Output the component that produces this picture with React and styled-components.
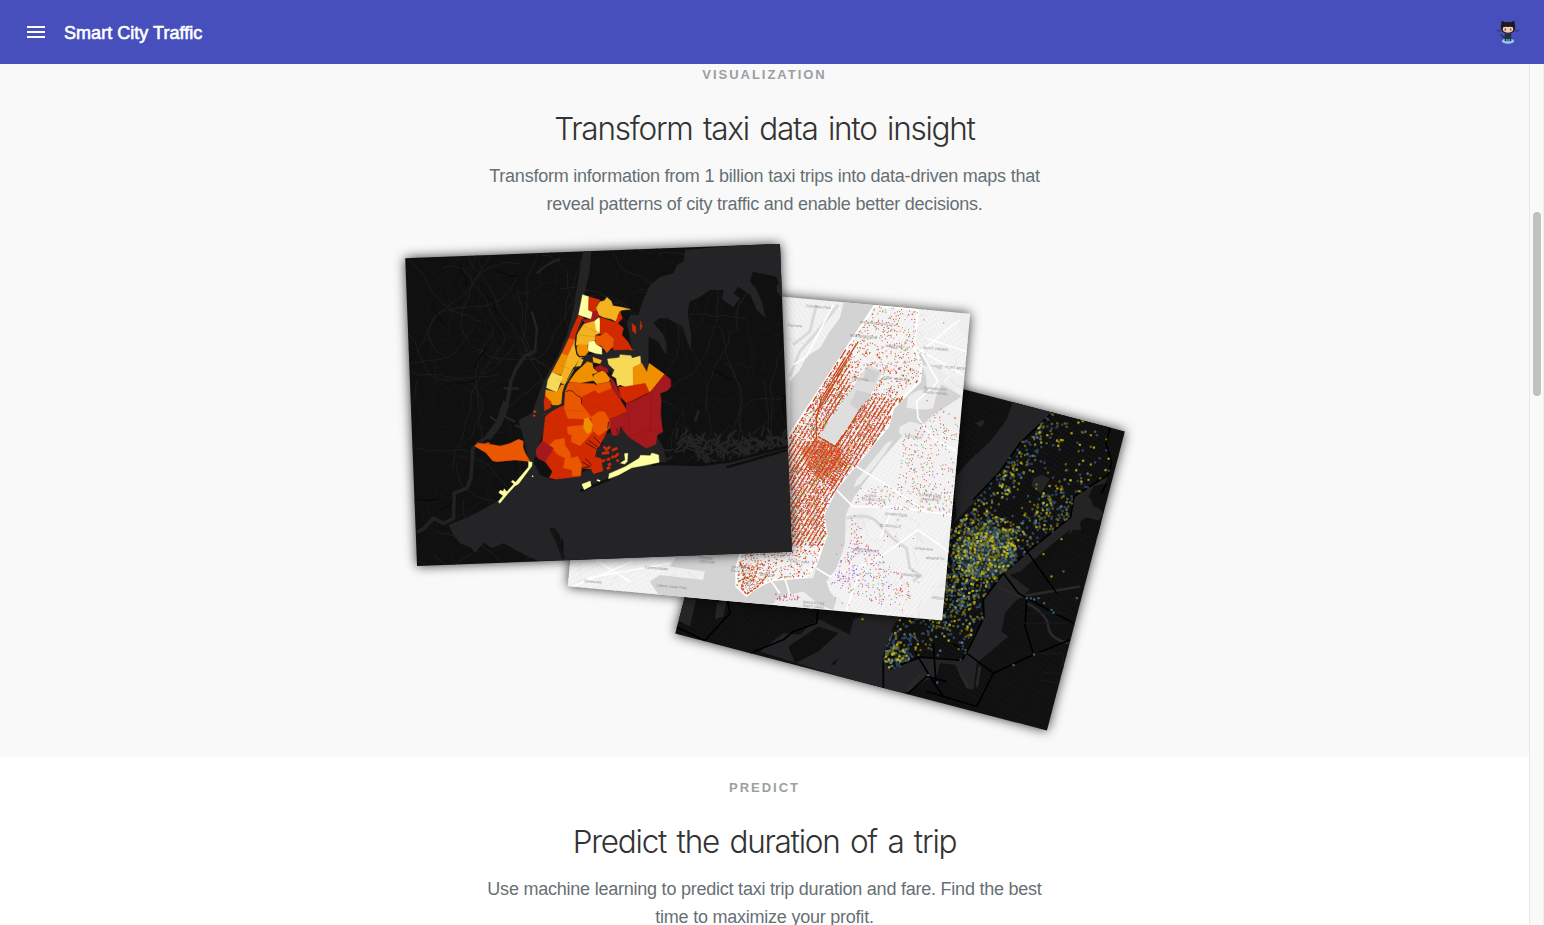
import React from 'react';
import styled, { createGlobalStyle } from 'styled-components';

const GlobalStyle = createGlobalStyle`
  *, *::before, *::after { box-sizing: border-box; }
  body {
    margin: 0;
    background: #fff;
    overflow: hidden;
    font-family: "Liberation Sans", Arial, sans-serif;
    -webkit-font-smoothing: antialiased;
  }
`;

const Page = styled.div`
  display: flex;
  flex-direction: column;
  height: 925px;
  overflow: hidden;
`;

const Toolbar = styled.header`
  display: flex;
  align-items: center;
  flex: none;
  height: 64px;
  padding: 0 24px 0 24px;
  background: #464fbb;
`;

const MenuButton = styled.button`
  display: flex;
  padding: 0;
  border: 0;
  background: none;
`;

const AppTitle = styled.h1`
  flex: 1;
  margin: 2px 0 0 16px;
  color: #fff;
  font-size: 18px;
  font-weight: 400;
  letter-spacing: 0.04px;
  -webkit-text-stroke: 0.6px #fff;
`;

const RepoLink = styled.a`
  display: flex;
`;

const Body = styled.div`
  display: flex;
  flex: 1;
  min-height: 0;
`;

const Content = styled.main`
  flex: 1;
  overflow: hidden;
`;

const ScrollTrack = styled.div`
  flex: none;
  width: 15px;
  padding: 148px 2px 0 3px;
  border-left: 1px solid #e8e8e8;
  border-right: 1px solid #ededed;
  background: #fafafa;
`;

const ScrollThumb = styled.div`
  width: 8px;
  height: 184px;
  border-radius: 4px;
  background: #c1c1c1;
`;

const Section = styled.section`
  display: flex;
  flex-direction: column;
  align-items: center;
  height: ${(p) => p.$height};
  padding-top: ${(p) => p.$top};
  background: ${(p) => p.$bg};
  text-align: center;
`;

const Eyebrow = styled.div`
  height: 16px;
  line-height: 16px;
  color: #9a9fa2;
  font-size: 13px;
  font-weight: 700;
  letter-spacing: 1.97px;
  text-transform: uppercase;
`;

const Heading = styled.h2`
  margin: 26px 0 0;
  height: 40px;
  line-height: 40px;
  color: #333;
  font-family: Inter, "Liberation Sans", sans-serif;
  font-size: 31.5px;
  font-weight: 300;
  letter-spacing: -1.25px;
  word-spacing: 2.8px;
  white-space: nowrap;
`;

const Lead = styled.p`
  margin: 13px 0 0;
  color: #667074;
  font-size: 18px;
  line-height: 28px;
  letter-spacing: -0.23px;
  white-space: nowrap;
`;

const Gallery = styled.div`
  position: relative;
  width: 730px;
  height: 500px;
  margin-top: 20px;
`;

const Photo = styled.figure`
  position: absolute;
  left: ${(p) => p.$x}px;
  top: ${(p) => p.$y}px;
  width: ${(p) => p.$w}px;
  height: ${(p) => p.$h}px;
  margin: 0;
  transform: rotate(${(p) => p.$angle}deg);
  box-shadow: 0 0 12px rgba(0, 0, 0, 0.8);
  background: ${(p) => p.$bg};
`;

const MapSvg = styled.svg`
  display: block;
  width: 100%;
  height: 100%;
  overflow: hidden;
`;

/* ---------- helpers for the generated map artwork ---------- */

function rng(seed) {
  let s = seed;
  return () => {
    s = (s * 1664525 + 1013904223) % 4294967296;
    return s / 4294967296;
  };
}

const parse = (str) => str.split(' ').map((p) => p.split(',').map(Number));

function inside(x, y, poly) {
  let hit = false;
  for (let i = 0, j = poly.length - 1; i < poly.length; j = i++) {
    const [xi, yi] = poly[i];
    const [xj, yj] = poly[j];
    if (yi > y !== yj > y && x < ((xj - xi) * (y - yi)) / (yj - yi) + xi) hit = !hit;
  }
  return hit;
}

function wander(seed, count, box, steps, len) {
  const r = rng(seed);
  let d = '';
  for (let i = 0; i < count; i++) {
    let x = box[0] + r() * box[2];
    let y = box[1] + r() * box[3];
    let a = r() * Math.PI * 2;
    d += `M${x.toFixed(0)},${y.toFixed(0)}`;
    for (let k = 0; k < steps; k++) {
      a += (r() - 0.5) * 0.8;
      x += Math.cos(a) * len;
      y += Math.sin(a) * len;
      d += `L${x.toFixed(0)},${y.toFixed(0)}`;
    }
  }
  return d;
}

function hatch(cx, cy, size, gap, angle) {
  const c = Math.cos(angle);
  const s = Math.sin(angle);
  let d = '';
  for (let t = -size; t <= size; t += gap) {
    const px = cx - s * t;
    const py = cy + c * t;
    d += `M${(px - c * size).toFixed(0)},${(py - s * size).toFixed(0)}L${(px + c * size).toFixed(0)},${(py + s * size).toFixed(0)}`;
  }
  return d;
}

function scatter(seed, count, poly, weight, size) {
  const r = rng(seed);
  const xs = poly.map((p) => p[0]);
  const ys = poly.map((p) => p[1]);
  const x0 = Math.min(...xs);
  const y0 = Math.min(...ys);
  const w = Math.max(...xs) - x0;
  const h = Math.max(...ys) - y0;
  let d = '';
  for (let i = 0; i < count; i++) {
    const x = x0 + r() * w;
    const y = y0 + r() * h;
    const k = r();
    if (inside(x, y, poly) && k < weight(x, y)) {
      d += `M${x.toFixed(1)},${y.toFixed(1)}h${size}`;
    }
  }
  return d;
}

const bump = (x, y, cx, cy, rx, ry) => Math.exp(-(((x - cx) / rx) ** 2) - ((y - cy) / ry) ** 2);

/* ---------- map 1: boroughs ---------- */

const ZONES = [
  ['#d22a00', '262,372 300,360 310,300 440,300 487,380 430,405 425,440 400,490 412,530 413,558 385,566 378,552 350,550 346,574 270,583 252,578 262,560 240,530 215,515 213,495 232,467 240,400'],
  ['#ffffa0', '352,29 371,35 370,75 383,80 378,103 362,97 340,90'],
  ['#d22a00', '371,35 405,45 392,65 395,80 383,82 370,75'],
  ['#f4b120', '404,50 417,47 425,37 438,48 443,62 470,67 495,73 468,76 458,90 456,112 440,103 415,97 400,90 393,68'],
  ['#a3191d', '383,80 395,78 402,93 385,108 360,118 352,103 378,103'],
  ['#d22a00', '340,90 355,98 345,125 328,167 311,160 320,135'],
  ['#f4b120', '355,118 388,108 392,125 404,145 390,150 390,165 370,170 366,182 332,180 335,150'],
  ['#ffffa0', '388,108 402,97 405,108 408,125 403,144 393,135'],
  ['#d22a00', '405,97 450,112 457,98 464,78 472,100 458,115 475,130 470,150 488,170 503,197 488,194 445,195 440,178 445,160 425,145 404,148'],
  ['#eb5600', '390,152 405,152 422,142 445,160 443,185 425,203 408,182 392,178'],
  ['#ffffa0', '370,170 388,167 392,178 410,188 410,208 390,205 368,197'],
  ['#f09000', '338,178 366,180 370,200 360,212 345,222 333,200'],
  ['#eb5600', '311,160 330,165 308,212 290,205'],
  ['#f09000', '290,205 308,212 288,270 260,262'],
  ['#f4b120', '330,165 334,210 345,218 325,250 300,300 282,290 308,212'],
  ['#f7d958', '260,262 292,275 275,322 244,308 248,285'],
  ['#f09000', '242,314 275,322 288,300 298,300 291,325 288,360 262,360 240,335'],
  ['#d22a00', '240,333 258,350 256,368 238,377 236,350'],
  ['#d22a00', '230,400 238,386 250,380 244,398'],
  ['#f09000', '366,230 382,235 384,250 400,262 380,268 388,286 345,294 312,290 332,262'],
  ['#f09000', '383,285 386,270 415,254 435,282 430,290 395,297'],
  ['#f4b120', '383,217 409,226 405,236 385,232'],
  ['#a3191d', '388,248 405,240 428,252 430,264 405,255 398,263'],
  ['#f7d958', '427,222 462,218 465,209 498,212 500,220 525,213 527,236 505,247 505,303 480,306 465,299 457,303 453,280 440,272 448,255 430,238'],
  ['#f09000', '503,248 530,235 545,262 552,235 598,268 570,312 552,322 540,296 505,303'],
  ['#a3191d', '598,268 617,284 617,305 605,318 584,325 588,345 586,392 593,440 576,450 572,478 543,490 490,455 465,425 460,450 442,452 428,405 485,382 482,358 552,325'],
  ['#a3191d', '435,275 445,287 455,305 468,335 466,345 440,308'],
  ['#d22a00', '460,306 480,305 540,295 552,322 484,355 467,336'],
  ['#eb5600', '395,298 435,290 438,310 400,325 388,315'],
  ['#eb5600', '300,300 318,290 345,295 388,296 398,310 350,335 347,357 380,398 357,403 308,400 298,372 298,330'],
  ['#eb5600', '380,395 400,380 418,380 432,405 433,430 400,452 383,437 378,410'],
  ['#eb5600', '306,425 355,420 360,438 383,440 345,482 318,470 320,450 308,447'],
  ['#f09000', '357,402 370,398 382,420 378,440 366,446 355,430'],
  ['#eb5600', '252,480 270,465 297,460 300,482 313,500 318,520 337,514 350,540 345,572 322,573 320,555 295,548 300,520 277,508'],
  ['#a3191d', '232,467 265,490 240,530 218,520 213,495'],
  ['#eb5600', '28,483 38,475 70,477 105,483 135,475 160,463 174,468 174,488 180,504 195,530 150,525 95,530 82,527 62,503'],
  ['#ffffa0', '190,530 201,532 200,543 160,597 149,603 127,627 104,655 99,650 114,632 101,623 105,616 114,619 117,611 125,620 146,597 138,590 143,586 151,592 190,546'],
  ['#ffffa0', '430,581 432,566 480,545 522,520 526,511 555,512 560,504 580,510 582,532 540,541 500,548 460,570'],
  ['#ffffa0', '350,598 375,588 378,603 357,614'],
  ['#ffffa0', '478,506 488,505 486,530 478,537 465,534 480,525'],
  ['#d22a00', '500,115 512,125 512,147 502,137'],
  ['#d22a00', '526,108 531,125 525,135'],
];

function BoroughMap() {
  return (
    <MapSvg viewBox="0 0 375.4 307.8">
      <g transform="translate(187.7 153.9) rotate(2.2) translate(-598.5 -404.9)">
        <g transform="translate(400 235) scale(.33333)">
          <path d={wander(5, 260, [0, 20, 1160, 950], 12, 12)} fill="none" stroke="#1a1a1b" strokeWidth="2" />
          <path d={wander(11, 60, [0, 20, 1160, 950], 26, 17)} fill="none" stroke="#222223" strokeWidth="2.2" />
          <path d={wander(31, 22, [0, 20, 1160, 950], 7, 10)} fill="none" stroke="#080808" strokeWidth="3" />
          <path
            d="M550,40L574,40 568,110 552,180 545,240 535,300 560,360 610,350 660,340 698,350 680,265 690,240 715,240 727,200 750,150 780,125 820,115 830,90 850,80 855,45 1145,20 1148,190 1130,170 1128,125 1095,118 1060,112 1050,140 1070,165 1085,200 1097,250 1070,225 1050,180 1015,155 1000,175 1020,190 1000,215 975,200 965,190 970,165 930,165 900,185 868,200 862,230 873,300 872,345 862,320 850,275 800,250 775,250 760,265 790,300 800,330 797,360 775,320 745,305 745,390 760,420 660,430 590,380 520,400 490,520 440,560 400,680 420,720 460,735 550,710 600,690 610,600 660,580 700,610 740,640 768,600 790,640 800,690 900,690 985,680 1165,635 1180,960 490,975 490,920 465,880 448,880 455,900 480,930 490,975 415,978 385,965 310,925 275,940 250,922 225,955 215,940 180,925 160,900 145,870 195,850 235,830 290,800 350,745 388,690 370,610 355,555 395,535 415,480 435,430 470,370 500,300 520,220Z"
            fill="#242426"
          />
          <path d="M1050,140L1058,110 1130,128 1136,148 1105,160 1075,158Z" fill="#101010" />
          <path d="M405,350L375,362 348,400 332,440 322,500 312,540 284,590 240,620 218,640 212,730 200,760 162,775 160,850 130,865 100,850 72,880 50,892" fill="none" stroke="#222224" strokeWidth="11" strokeLinejoin="round" />
          <path d="M318,500L296,565 262,610" fill="none" stroke="#232325" strokeWidth="20" />
          <path d="M405,350L410,280 395,230M410,115Q440,85 480,72M270,545l35,25M305,540l40,20M345,570l30,15M310,460h45M885,560l10,-35" fill="none" stroke="#232325" strokeWidth="7" />
          <path d={wander(77, 150, [815, 605, 340, 60], 4, 8)} fill="none" stroke="#242426" strokeWidth="5" />
          <path d="M780,686L900,690 985,680 1165,634M980,697L1160,645M540,768L630,732M755,690l30,-5" fill="none" stroke="#0f0f10" strokeWidth="8" />
          <path d="M452,880Q475,920 490,972" fill="none" stroke="#151516" strokeWidth="10" />
        </g>
        <g transform="translate(465 285) scale(.33333)">
          {ZONES.map(([fill, points], i) => (
            <polygon key={i} points={points} fill={fill} stroke={fill} strokeWidth="1.2" />
          ))}
          <path d="M350,120l42,20M340,150l50,5M285,240l35,15M275,285l25,10M320,290l25,40 30,5M430,290l37,55M385,360l60,30M465,385l25,5 5,45M560,320l-5,120M490,455l60,-20 38,8M275,440l35,5M300,375l60,5" fill="none" stroke="#000" strokeOpacity=".13" strokeWidth="2" />
          <path d="M352,103L333,150 330,180 335,205 342,215 361,214" fill="none" stroke="#242426" strokeWidth="4" />
          <path d="M372,208L350,240 327,250 309,285 296,320 292,358 265,372 245,383 232,402" fill="none" stroke="#242426" strokeWidth="7" />
          <path d="M343,220l12,4 -9,19 -15,2z" fill="#f4b120" />
          <path d="M326,253L303,292" stroke="#f4b120" strokeWidth="2" />
          <path d="M302,320q12,-8 22,0 8,12 24,18 l2,18" fill="none" stroke="#3c1d12" strokeWidth="2.5" />
          <path d="M362,473l30,18M370,466l28,20M385,455l25,25M350,530l25,15M348,550l28,-6M360,520l20,20M430,410l-2,20M455,430l5,30M470,425l-2,30" fill="none" stroke="#4b170b" strokeWidth="3" />
          <path d="M395,490L425,470 455,455 480,480 470,530 430,560 412,545 408,520 390,515Z" fill="#242426" />
          <path d="M435,485l-15,12M440,497l16,-8M410,505l22,-2M405,530l15,-5M425,525l10,-5M440,520l5,-8M425,552l10,-6M460,505l-12,12M455,530l5,-6M437,535l-8,6M415,490l6,-5" stroke="#d22a00" strokeWidth="8" />
          <path d="M205,380h8M204,392h6M35,474h3M62,475h12" stroke="#e04000" strokeWidth="5" />
          <path d="M395,585l10,3M201,572l3,3" stroke="#ffffa0" strokeWidth="4" />
        </g>
      </g>
    </MapSvg>
  );
}

/* ---------- map 2: pickups ---------- */

const MANHATTAN = parse('945,62 1075,75 1062,185 1085,235 1080,290 1000,370 985,425 930,490 830,610 790,690 800,750 770,835 740,875 640,885 600,900 560,932 530,905 530,850 545,800 600,640 690,450');
const PARK = parse('925,240 968,258 945,310 822,484 775,455');
const QUEENS = parse('1140,370 1195,400 1170,700 1060,680 880,660 900,610 1010,600 1030,450');
const BROOKLYN = parse('870,680 910,700 905,760 960,800 1050,900 1060,960 960,960 810,900 840,830 870,780');
const FARSIDE = parse('1080,80 1200,90 1180,290 1060,1000 820,960 640,920 700,930 900,700 1100,400');
const AVENUE_ANGLE = Math.atan2(0.84, -0.53);

function avenues() {
  const r = rng(42);
  let d = '';
  const c = Math.cos(AVENUE_ANGLE);
  const s = Math.sin(AVENUE_ANGLE);
  for (let k = -180; k < 250; k += 11) {
    for (let t = -330; t < 400; t += 4) {
      const x = 800 + c * t - s * -k;
      const y = 500 + s * t + c * -k;
      if (!inside(x, y, MANHATTAN) || inside(x, y, PARK)) continue;
      const east = x > 870 && y < 335;
      const far = y < 170 || y > 780;
      const p = east || far ? 0.06 : y < 470 && x < 800 ? 0.5 : 0.82;
      if (r() < p) d += `M${x.toFixed(1)},${y.toFixed(1)}l${(c * 5).toFixed(1)},${(s * 5).toFixed(1)}`;
    }
  }
  return d;
}

const cityWeight = (x, y) => {
  if (inside(x, y, PARK)) return 0;
  return 0.17 + 0.6 * bump(x, y, 800, 520, 100, 150) + 0.4 * bump(x, y, 920, 400, 70, 90) + 0.35 * bump(x, y, 810, 330, 45, 90) + 0.5 * bump(x, y, 700, 680, 100, 110) + 0.4 * bump(x, y, 570, 870, 45, 70);
};

const PICKUP_LABELS = [
  [738, 66, 'Columbia Park'], [684, 124, 'Fairview'], [900, 115, 'MANHATTANVILLE'], [870, 155, 'MORNINGSIDE'], [978, 186, 'HARLEM'],
  [1090, 192, 'MOTT HAVEN'], [1156, 250, 'PORT MORRIS'], [1092, 312, 'Randalls and'], [1090, 324, 'Wards Islands'], [968, 282, 'EAST HARLEM'],
  [1035, 458, 'ASTORIA'], [918, 634, 'LONG'], [906, 645, 'ISLAND CITY'], [1078, 633, 'SUNNYSIDE'], [1083, 645, 'GARDENS'],
  [975, 690, 'SUNNYSIDE'], [960, 724, 'BLISSVILLE'], [1098, 822, 'MASPETH'], [880, 797, 'GREENPOINT'], [1022, 872, 'GRANDHILL'],
  [416, 822, 'TOWER'], [418, 833, 'CENTER'], [254, 850, 'Communipaw'], [73, 892, 'Greenville'], [290, 905, 'Liberty State Park'],
  [514, 850, 'BATTERY'], [512, 861, 'PARK CITY'], [730, 955, 'BROOKLYN'], [728, 966, 'NAVY YARD'], [1065, 793, 'Grand Ave'],
  [875, 285, 'CENTRAL'], [1115, 942, 'FRESH'], [600, 873, 'BRIDGE'], [690, 832, 'EAST WAY'],
];

function PickupMap() {
  return (
    <MapSvg viewBox="0 0 375.6 307.8">
      <g transform="translate(187.8 153.9) rotate(-5.22) translate(-769 -450)">
        <g transform="translate(560 285) scale(.33333)">
          <path d={wander(9, 170, [0, 20, 1240, 990], 8, 9)} fill="none" stroke="#e3e3e4" strokeWidth="7" strokeOpacity=".45" />
          <path d={hatch(1080, 190, 130, 11, 1) + hatch(1080, 190, 130, 14, -0.6) + hatch(1080, 560, 160, 10, 0.5) + hatch(1080, 560, 160, 13, 2.1) + hatch(980, 870, 140, 10, 0.7) + hatch(980, 870, 140, 13, 2.2) + hatch(160, 860, 130, 10, 1.1) + hatch(160, 860, 130, 14, -0.5) + hatch(740, 120, 110, 12, 1)} fill="none" stroke="#fafafa" strokeWidth="2" />
          <path d="M855,40L955,60 690,460 600,640 540,800 530,905 560,932 640,885 760,880 800,750 790,690 830,610 930,490 985,425 1000,370 1080,290 1085,235 1062,185 1078,190 1110,240 1150,240 1130,290 1200,330 1205,335 1120,390 1085,425 1030,450 960,530 880,640 858,690 855,780 830,850 800,890 810,920 830,945 820,975 780,960 730,920 690,930 640,955 630,960 300,935 270,890 300,870 430,885 435,860 330,845 350,815 690,800 690,290 720,255 740,215 780,190 810,140 840,100Z" fill="#d3d3d4" />
          <path d="M835,60L780,130 720,200 690,275" fill="none" stroke="#dadadb" strokeWidth="9" />
          <polygon points={MANHATTAN.map((p) => p.join(',')).join(' ')} fill="#f1f1f2" stroke="#fff" strokeWidth="7" />
          <path d={hatch(800, 480, 500, 12, AVENUE_ANGLE)} stroke="#fff" strokeWidth="2" clipPath="url(#pickup-city)" />
          <clipPath id="pickup-city"><polygon points={MANHATTAN.map((p) => p.join(',')).join(' ')} /></clipPath>
          <path d="M1045,335Q1080,305 1100,320 1105,275 1085,240 1140,240 1160,275 1130,315 1120,370 1080,378 1040,368ZM1020,425l30,-15 40,10 -5,30 -45,8 -22,-12ZM1000,465l-20,10 -90,110 -8,22 20,-10 60,-75ZM645,945l40,-20 50,15 30,20 -20,35 -90,-30Z" fill="#ececed" />
          <polygon points={PARK.map((p) => p.join(',')).join(' ')} fill="#dedede" />
          <path d="M890,315l45,12 -30,55 -35,-25ZM920,248l40,15 -15,30 -35,-5Z" fill="#d0d0d1" />
          <path d="M860,700Q930,680 960,720T1040,790L1050,850 1080,870 1060,890M770,60L750,140 700,180" fill="none" stroke="#d9d9da" strokeWidth="9" />
          <path d="M1075,75L1062,185 1210,270M1085,205L1135,290 1070,350 1075,400 1120,460 1190,500M890,545L980,600 1100,680 1180,690M830,615L880,665 1000,665 1100,680M770,850L810,875 940,830 1075,735 1180,810M635,890L660,925M675,880L690,930M1075,205L1200,105M1100,160L1220,200M860,975L900,860M1000,665L960,760M40,905L220,830M100,820L210,890M80,880L330,835M700,240L740,215 820,60" fill="none" stroke="#fff" strokeWidth="5" />
          <g fill="none">
            <path d={avenues()} stroke="#d03a10" strokeWidth="4" />
            <path d="M895,170L785,340 770,400 770,460 700,560M850,250L780,370M775,455L825,485 890,400" stroke="#c04812" strokeWidth="4" />
            <path d={hatch(808, 535, 52, 8, 0.55)} stroke="#d43a00" strokeWidth="3" strokeDasharray="19 7" />
            <path d="M725,490L770,465 840,490 850,540 790,590 750,555Z" fill="#d43a00" fillOpacity=".5" />
            <path d="M540,830l15,45 -10,35 15,18 35,-25 25,-30M550,870l30,20 15,-45M540,840l40,15M535,890l45,-20" stroke="#cf4418" strokeWidth="4" strokeDasharray="9 3" />
            <path d={scatter(3, 19000, MANHATTAN, cityWeight, 3)} stroke="#dc4520" strokeWidth="3" />
            <path d={scatter(4, 5400, MANHATTAN, cityWeight, 3)} stroke="#6aa238" strokeWidth="3" />
            <path d={scatter(6, 3600, MANHATTAN, cityWeight, 3)} stroke="#a58bea" strokeWidth="3" />
            <path d={scatter(8, 4200, MANHATTAN, (x, y) => 0.45 * cityWeight(x, y), 3)} stroke="#fff" strokeWidth="3" />
            <path d={scatter(12, 700, QUEENS, () => 0.5, 3) + scatter(13, 650, BROOKLYN, () => 0.5, 3) + scatter(14, 700, FARSIDE, () => 0.3, 3)} stroke="#e4604c" strokeWidth="3.4" />
            <path d={scatter(15, 320, QUEENS, () => 0.5, 3) + scatter(16, 240, BROOKLYN, () => 0.5, 3)} stroke="#70ad4c" strokeWidth="3.4" />
            <path d={scatter(17, 160, QUEENS, () => 0.5, 3) + scatter(18, 700, BROOKLYN, (x, y) => 0.1 + 0.6 * bump(x, y, 860, 850, 90, 80), 3)} stroke="#9763ff" strokeWidth="3.4" />
            <path d={scatter(19, 100, parse('640,925 720,930 710,950 650,945'), () => 0.6, 3)} stroke="#c0506a" strokeWidth="3" />
          </g>
          <g fill="#8c8c8e" fontSize="11.5" fontFamily="Liberation Sans, sans-serif">
            {PICKUP_LABELS.map(([x, y, label]) => (
              <text key={label + y} x={x} y={y} transform={`rotate(5.2 ${x} ${y})`}>{label}</text>
            ))}
          </g>
        </g>
      </g>
    </MapSvg>
  );
}

/* ---------- map 3: night activity ---------- */

const NIGHT_CITY = parse('1180,95 1350,140 1338,190 1355,250 1345,285 1242,350 1232,412 1110,510 1030,580 970,660 972,712 930,800 905,842 780,832 720,860 690,867 668,835 700,740 760,650 830,500 950,360 1020,275 1080,190');
const NIGHT_PARK = parse('1165,200 1232,238 1180,300 1068,432 1000,400');

const nightWeight = (x, y) => {
  if (inside(x, y, NIGHT_PARK)) return 0.03;
  return 0.045 + bump(x, y, 980, 505, 95, 100) + 0.5 * bump(x, y, 860, 640, 90, 90) + 0.22 * bump(x, y, 1180, 390, 80, 70) + 0.3 * bump(x, y, 1040, 290, 60, 60) + 0.8 * bump(x, y, 700, 830, 45, 70) + 0.2 * bump(x, y, 1130, 180, 60, 90);
};

function NightMap() {
  const dots = (seed, n) => scatter(seed, n, NIGHT_CITY, nightWeight, 0.1);
  return (
    <MapSvg viewBox="0 0 384 309.3">
      <g transform="translate(192 154.65) rotate(-14.6) translate(-900 -532.8)">
        <g transform="translate(660 380) scale(.33333)">
          <g fill="none" stroke="#1b1b1d" strokeWidth="1.5">
            <path d={hatch(1180, 450, 560, 11, 2.15) + hatch(1180, 450, 560, 15, 0.58)} />
            <path d={hatch(330, 740, 330, 13, 0.5) + hatch(330, 740, 330, 13, 2.1)} />
          </g>
          <path d="M1065,50L1180,95 1080,190 1020,275 950,360 880,430 760,650 700,740 668,835 690,867 780,832 905,842 930,800 972,712 970,660 1030,580 1110,510 1232,412 1242,350 1345,285 1335,310 1300,320 1285,350 1330,400 1300,450 1240,450 1190,500 1100,570 1050,585 1110,630 1060,670 1035,700 1025,755 1045,770 985,820 950,850 940,930 920,925 885,855 840,850 830,890 800,900 750,935 700,940 300,815 330,790 370,760 420,765 450,735 480,720 570,765 580,720 620,700 850,480 890,410 880,300 930,240 990,185 1040,120Z" fill="#242426" />
          <polygon points={NIGHT_CITY.map((p) => p.join(',')).join(' ')} fill="#0e0e0f" />
          <clipPath id="night-city"><polygon points={NIGHT_CITY.map((p) => p.join(',')).join(' ')} /></clipPath>
          <path d={hatch(1000, 500, 500, 9, 2.14) + hatch(1000, 500, 500, 13, 0.57)} stroke="#1b1b1c" strokeWidth="2" clipPath="url(#night-city)" />
          <path d="M1120,295l25,-10 25,12 -28,45 -28,-25ZM945,130l25,-10 3,10 -10,12ZM170,670l30,-10 -10,50 -25,8ZM50,660L110,650 90,740 50,720ZM510,745l60,20 -5,12 -60,-22Z" fill="#252528" />
          <path d="M385,800l90,-60 60,20 -60,55 -70,35ZM510,855l25,-20 -10,20ZM1260,430q10,-20 30,-15l35,10 -10,40 -50,-10ZM1230,450l-50,40 -100,85 60,-20 80,-75ZM1290,345l30,-20 20,10 -20,50 -20,-5Z" fill="#101011" />
          <path d="M1100,670Q1160,700 1165,740T1230,790M1010,620L1080,650 1260,620M740,935l40,-50M900,880l25,45M960,860l-10,60" fill="none" stroke="#29292b" strokeWidth="8" />
          <g fill="none" stroke="#000" strokeWidth="5" strokeLinejoin="round">
            <path d="M1180,95L1080,190 1020,275 940,360M1350,145L1338,190 1355,250 1345,285 1242,350 1232,412 1110,510 1030,580 970,660 972,712 930,800 905,842 780,832 690,867M670,830V925M45,740L135,782 210,700 200,650M270,820L370,780 400,755 470,730 475,680M1095,505L1190,640M1030,580L1075,640 1240,730M880,790L1000,880 950,980 800,935M765,815L810,890 850,950M820,790L828,910M1000,880L1120,825 1230,780M1100,660L1095,740 1120,820M1325,340L1340,310M740,945L800,890 860,905" />
          </g>
          <path d="M1100,700h120M1090,730h130M1130,820h80v60h-60M1140,900l60,10" fill="none" stroke="#1c1c1e" strokeWidth="3" />
          <g strokeLinecap="round" fill="none">
            <ellipse cx="975" cy="515" rx="95" ry="80" fill="#5d7c70" fillOpacity=".22" />
            <path d={dots(101, 8500)} stroke="#4374a3" strokeWidth="8" strokeOpacity=".5" />
            <path d={dots(103, 6200)} stroke="#b9a900" strokeWidth="7.5" strokeOpacity=".5" />
            <path d={dots(107, 1800)} stroke="#86b4bd" strokeWidth="8" strokeOpacity=".55" />
            <path d={dots(109, 2400)} stroke="#e0cf10" strokeWidth="8" strokeOpacity=".7" />
            <path d="M1100,655h1M1112,656h1M1122,659h1M1135,655h1M1174,690h1M1180,698h1M1122,824h1M1060,856h1M805,886h1M831,908h1M1210,575h1M1152,670h1M1250,655h1" stroke="#4b7da6" strokeWidth="7" strokeOpacity=".7" />
            <path d="M1255,128h1M1268,124h1M1292,166h1M1336,271h1M1292,254h1M1285,300h1M1256,334h1M1174,590h1M607,718h1M1150,523h1M1204,478h1" stroke="#b5a600" strokeWidth="7" strokeOpacity=".8" />
          </g>
        </g>
      </g>
    </MapSvg>
  );
}

/* ---------- icons ---------- */

function MenuIcon() {
  return (
    <svg width="24" height="24" viewBox="0 0 24 24" fill="#fff" aria-hidden="true">
      <path d="M3 18h18v-2H3v2zm0-5h18v-2H3v2zm0-7v2h18V6H3z" />
    </svg>
  );
}

function OctocatIcon() {
  return (
    <svg width="24" height="24" viewBox="0 0 24 24" aria-hidden="true">
      <ellipse cx="12" cy="21.1" rx="6.2" ry="2.6" fill="#8fd0f0" />
      <path d="M8.7 20.8V13.4h6.6v7.4q-.6 1.2-1.3 0v-2h-.6v2.4h-1v-2.4h-.8v2.4h-1v-2.4H10v2q-.7 1.2-1.3 0z" fill="#242d42" />
      <path d="M9 17.3q-2 .6-2.6-1t-2-1.5" fill="none" stroke="#1c3440" strokeWidth="1.3" />
      <path d="M5.6.9Q7.4.8 9 2.2q3-.6 6 0Q16.700.8 18.400.9q.6 1.600.2 3.100Q20 6 19 9.300 17.500 13.600 12 13.600T5 9.300Q4 6 5.400 4 5 2.500 5.600.9z" fill="#1c1a1c" />
      <path d="M7 7.600Q8 6.300 12 6.900q4-.6 5 .7 1.300 5-5 5.200-6.300-.2-5-5.200z" fill="#f2cfb4" />
      <ellipse cx="9.300" cy="9.600" rx=".8" ry="1.300" fill="#8a5a4c" />
      <ellipse cx="14.700" cy="9.600" rx=".8" ry="1.300" fill="#8a5a4c" />
      <path d="M.6 10.300h4.400M1.200 11.600l3.800-.6M23.400 10.300H19M22.800 11.600l-3.800-.6" stroke="#30357c" strokeWidth=".6" />
    </svg>
  );
}

export default function App() {
  return (
    <Page>
      <GlobalStyle />
      <Toolbar>
        <MenuButton aria-label="Menu"><MenuIcon /></MenuButton>
        <AppTitle>Smart City Traffic</AppTitle>
        <RepoLink aria-label="Repository"><OctocatIcon /></RepoLink>
      </Toolbar>
      <Body>
        <Content>
          <Section $height="693px" $top="3px" $bg="#f9f9f9">
            <Eyebrow>Visualization</Eyebrow>
            <Heading>Transform taxi data into insight</Heading>
            <Lead>
              Transform information from 1 billion taxi trips into data-driven maps that
              <br />
              reveal patterns of city traffic and enable better decisions.
            </Lead>
            <Gallery>
              <Photo $x={308.5} $y={140.2} $w={384} $h={309.3} $angle={14.6} $bg="#101010"><NightMap /></Photo>
              <Photo $x={181.7} $y={58.1} $w={375.6} $h={307.8} $angle={5.22} $bg="#efeff0"><PickupMap /></Photo>
              <Photo $x={11.3} $y={13} $w={375.4} $h={307.8} $angle={-2.2} $bg="#101010"><BoroughMap /></Photo>
            </Gallery>
          </Section>
          <Section $height="190px" $top="23px" $bg="#fff">
            <Eyebrow>Predict</Eyebrow>
            <Heading>Predict the duration of a trip</Heading>
            <Lead>
              Use machine learning to predict taxi trip duration and fare. Find the best
              <br />
              time to maximize your profit.
            </Lead>
          </Section>
        </Content>
        <ScrollTrack>
          <ScrollThumb />
        </ScrollTrack>
      </Body>
    </Page>
  );
}
